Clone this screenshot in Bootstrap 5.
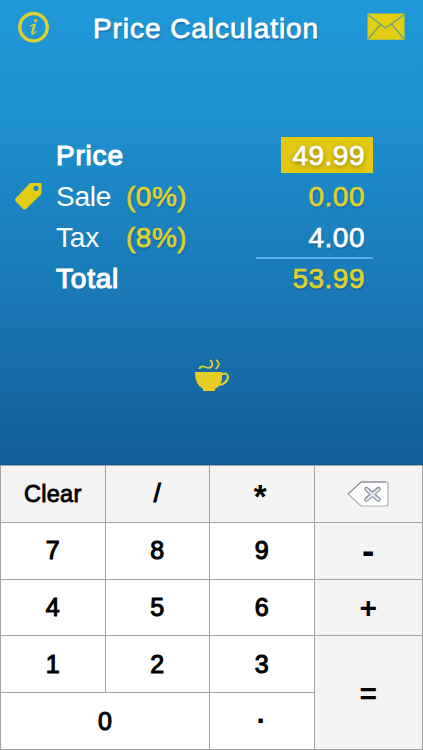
<!DOCTYPE html>
<html lang="en">
<head>
<meta charset="utf-8">
<meta name="viewport" content="width=device-width, initial-scale=1">
<title>Price Calculation</title>
<link href="https://cdn.jsdelivr.net/npm/bootstrap@5.3.0/dist/css/bootstrap.min.css" rel="stylesheet">
<style>
body{font-family:"Liberation Sans",Arial,sans-serif;width:423px;height:750px;overflow:hidden}
.display-area{height:465px;background:linear-gradient(#2098d8 0%,#1e90ce 25%,#1a7ab8 60%,#135d96 100%)}
.topbar{height:60px;padding:0 18px}
.topbar svg,.cup svg,.tag-cell svg{display:block}
.app-title{font-size:28px;line-height:32px;color:#fff;-webkit-text-stroke:.8px #fff;text-shadow:1px 2px 2px rgba(0,40,80,.35);letter-spacing:.95px;padding:13px 5px 0 0}
.sums{padding:75px 50px 0 14px}
.sum-row{display:grid;grid-template-columns:42px 70px 1fr auto;height:41px;line-height:41px;font-size:28px;color:#fff;align-items:center}
.strong-label{-webkit-text-stroke:1.2px currentColor;letter-spacing:.8px}
.thin-label{letter-spacing:-.2px}
.rate,.amount{-webkit-text-stroke:.75px currentColor;text-shadow:1px 2px 2px rgba(0,40,80,.3)}
.rate{letter-spacing:.5px}
.amount{letter-spacing:.5px;margin-right:8px}
.yellow{color:#ddd02f}
.active-amount{background:#e3c912;line-height:37px;height:36px;width:92px;text-align:right;padding-right:8px;margin-right:0;position:relative;top:-1px;text-shadow:0 2px 5px rgba(90,70,0,.7)}
.total-line{width:117px;height:2px;background:#56b0ee;margin:-1px 0 -1px auto}
.cup{padding-top:59px}
.keys{display:grid;height:285px;grid-template-columns:103.5px 103.5px 103.5px 107.5px;grid-template-rows:repeat(5,1fr);gap:1px;background:#a4a4a6;padding:1px}
.key{border:0;border-radius:0;padding:0;background:#fff;color:#000;font-size:25px;line-height:1;-webkit-text-stroke:1.1px #000;display:flex;align-items:center;justify-content:center}
.key svg{display:block}
.key-alt{background:#f4f4f4}
.key-word{font-size:23.5px;-webkit-text-stroke-width:.85px;letter-spacing:.3px;padding-top:1px}
.key-op{font-size:30px;font-weight:700;-webkit-text-stroke-width:0;padding-top:2px}
.key-minus{font-size:37px;padding-bottom:3px}
.key-star{font-size:33px;padding:6px 3px 0 0;-webkit-text-stroke-width:0;font-weight:700}
.key-dot{font-weight:700;font-size:30px;-webkit-text-stroke-width:0;padding:0 2px 16px 0}
</style>
<script src="https://cdn.jsdelivr.net/npm/bootstrap@5.3.0/dist/js/bootstrap.bundle.min.js"></script>
</head>
<body class="m-0">
<main class="display-area">
  <header class="topbar d-flex justify-content-between align-items-start">
    <svg class="mt-2" width="32" height="38" viewBox="0 0 32 38" aria-label="Info"><circle cx="15.5" cy="19.2" r="13.7" fill="none" stroke="#ddd02f" stroke-width="3.4"/><circle cx="17.6" cy="12.6" r="1.7" fill="#ddd02f"/><path d="M12 18.2Q15 16.6 17.200 16.400L14 25.200Q13.600 26.800 15.500 25.700L18.500 23.200" fill="none" stroke="#ddd02f" stroke-width="1.1"/><path d="M16.500 17 14 25" stroke="#ddd02f" stroke-width="2.3"/></svg>
    <h1 class="app-title fw-normal mb-0">Price Calculation</h1>
    <svg width="38" height="42" viewBox="0 0 38 42" aria-label="Mail"><path d="M.5 13.500h37v26.300H.5z" fill="#e3ce12"/><path d="M1 15 18.500 28 37 15M1 39 13.500 24.500M37 39 24.500 24" fill="none" stroke="#62a477" stroke-width="1.300"/></svg>
  </header>
  <section class="sums">
    <div class="sum-row"><span></span><span class="strong-label">Price</span><span></span><span class="amount active-amount">49.99</span></div>
    <div class="sum-row"><span class="tag-cell"><svg width="29" height="29" viewBox="0 0 29 29"><path fill-rule="evenodd" d="M16 1H26.500Q27.500 1 27.500 2V12L12 27Q10.500 28 9 27L1.500 19Q.5 18 1.500 16.500ZM22 3.800a2.700 2.700 0 1 0 .1 0Z" fill="#e5cc14"/></svg></span><span class="thin-label">Sale</span><span class="rate yellow">(0%)</span><span class="amount yellow">0.00</span></div>
    <div class="sum-row"><span></span><span class="thin-label">Tax</span><span class="rate yellow">(8%)</span><span class="amount">4.00</span></div>
    <div class="total-line"></div>
    <div class="sum-row"><span></span><span class="strong-label">Total</span><span></span><span class="amount yellow">53.99</span></div>
  </section>
  <div class="cup d-flex justify-content-center"><svg width="36" height="34" viewBox="0 0 36 34"><path d="M1 14H28V21Q27 28 21 31V33H9V31Q1 27 1 14Z" fill="#e8cb24"/><path d="M27 16.500Q34 14 34 19Q33 25.500 25.500 27" fill="none" stroke="#ddcf38" stroke-width="2.100"/><path d="M5.500 11Q6 8 9.500 8.500Q16 11.500 18 8Q19 4 16 2M21.500 11Q25.500 8 24.500 5Q24 3 22 2" fill="none" stroke="#ddcf38" stroke-width="1.800"/></svg></div>
</main>
<section class="keys">
  <button class="key key-alt key-word">Clear</button><button class="key key-alt">/</button><button class="key key-alt key-star">*</button>
  <button class="key key-alt" aria-label="Backspace"><svg width="44" height="28" viewBox="0 0 44 28"><path d="M2 14 15 2H40Q42 2 42 4V24Q42 26 40 26H15Z" fill="#fff" stroke="#a7acb6" stroke-width="1.200"/><path d="M2 14 15 2H40" fill="none" stroke="#7d838f"/><path d="m20.500 9 12 10.500m0-10.500L20.500 19.500" stroke="#7f8796" stroke-width="4.400" stroke-linecap="round"/><path d="m20.700 9.400 11.700 10.200m0-10.200L20.700 19.600" stroke="#e5e8ee" stroke-width="2.500" stroke-linecap="round"/></svg></button>
  <button class="key">7</button><button class="key">8</button><button class="key">9</button><button class="key key-alt key-op key-minus">-</button>
  <button class="key">4</button><button class="key">5</button><button class="key">6</button><button class="key key-alt key-op">+</button>
  <button class="key">1</button><button class="key">2</button><button class="key">3</button><button class="key key-alt key-op" style="grid-row:span 2">=</button>
  <button class="key" style="grid-column:span 2">0</button><button class="key key-dot">.</button>
</section>
</body>
</html>
